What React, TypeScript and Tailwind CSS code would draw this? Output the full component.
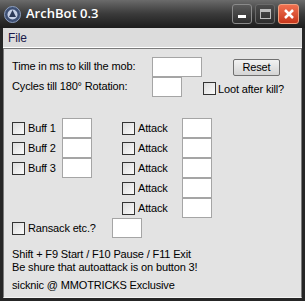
import React from "react";

const font = { fontFamily: '"Liberation Sans", Arial, sans-serif' };

function Box({ w }: { w: string }) {
  return <div className={`${w} h-[20px] bg-white border border-[#a5a5a5] shrink-0`} />;
}

function Check() {
  return (
    <div className="w-[13px] h-[13px] shrink-0 border border-[#333] bg-gradient-to-br from-[#dcdcdc] to-[#fafafa]" />
  );
}

function Row({ label, labelW }: { label: string; labelW: string }) {
  return (
    <div className="flex items-center h-[20px]">
      <Check />
      <span className={`ml-[3px] ${labelW}`}>{label}</span>
      <Box w="w-[30px]" />
    </div>
  );
}

export default function App() {
  return (
    <div className="w-[305px] h-[301px] bg-[#262626] flex flex-col text-[11px] tracking-[-0.15px] text-black whitespace-nowrap overflow-hidden" style={font}>
      {/* title bar */}
      <div className="h-[28px] flex items-center bg-gradient-to-b from-[#6b6b6b] via-[#3a3a3a] to-[#1d1d1d] pl-[4px] pr-[6px] shrink-0">
        <svg width="17" height="17" viewBox="0 0 17 17">
          <circle cx="8.5" cy="8.5" r="8" fill="#3d4f73" stroke="#8fa0c0" />
          <circle cx="8.5" cy="8.5" r="5" fill="#c7d1e6" />
          <path d="M8.5 4 L12 11 L5 11 Z" fill="#2d3a58" />
        </svg>
        <span className="ml-[5px] text-white text-[13px] font-semibold tracking-normal" style={{ fontFamily: '"Open Sans", sans-serif' }}>
          ArchBot 0.3
        </span>
        <div className="ml-auto flex gap-[3px]">
          <div className="w-[20px] h-[20px] rounded-[3px] border border-[#8a8a8a] bg-gradient-to-b from-[#5a5a5a] to-[#2e2e2e] flex items-end justify-center pb-[5px]">
            <div className="w-[8px] h-[3px] bg-white" />
          </div>
          <div className="w-[20px] h-[20px] rounded-[3px] border border-[#6a6a6a] bg-gradient-to-b from-[#4c4c4c] to-[#2e2e2e] flex items-center justify-center">
            <div className="w-[11px] h-[10px] border border-[#bbb] border-t-[3px]" />
          </div>
          <div className="w-[21px] h-[20px] rounded-[3px] border border-[#f0a080] bg-gradient-to-b from-[#f07050] to-[#c8361a] flex items-center justify-center">
            <svg width="12" height="12" viewBox="0 0 12 12">
              <path d="M2 2 L10 10 M10 2 L2 10" stroke="white" strokeWidth="2.5" />
            </svg>
          </div>
        </div>
      </div>

      <div className="flex-1 flex flex-col mx-[3px] mb-[3px] min-h-0">
        {/* menu */}
        <div className="h-[19px] bg-[#dcdcdc] flex items-center px-[5px] shrink-0 text-[12px]">
          <span className="text-[#1a1a4a]">File</span>
        </div>
        <div className="h-px bg-white shrink-0" />

        {/* panel */}
        <div className="flex-1 bg-[#e3e3e3] border border-[#7a7a7a] border-b-[#f4f4f4] pl-[8px] pt-[8px]">
          <div className="flex h-[40px]">
            <div className="w-[140px] flex flex-col">
              <span className="h-[20px] leading-[18px]">Time in ms to kill the mob:</span>
              <span className="h-[20px] leading-[18px]">Cycles till 180° Rotation:</span>
            </div>
            <div className="flex flex-col">
              <Box w="w-[50px]" />
              <Box w="w-[30px]" />
            </div>
            <div className="flex flex-col ml-px">
              <button className="ml-[30px] mt-[2px] w-[47px] h-[17px] border border-[#707070] rounded-[2px] bg-gradient-to-b from-[#f2f2f2] to-[#d4d4d4] leading-none text-[11px]">
                Reset
              </button>
              <div className="flex items-center mt-[5px]">
                <Check />
                <span className="ml-[2px]">Loot after kill?</span>
              </div>
            </div>
          </div>

          <div className="flex mt-[21px]">
            <div className="w-[110px] flex flex-col">
              <Row label="Buff 1" labelW="w-[34px]" />
              <Row label="Buff 2" labelW="w-[34px]" />
              <Row label="Buff 3" labelW="w-[34px]" />
            </div>
            <div className="flex flex-col">
              <Row label="Attack" labelW="w-[44px]" />
              <Row label="Attack" labelW="w-[44px]" />
              <Row label="Attack" labelW="w-[44px]" />
              <Row label="Attack" labelW="w-[44px]" />
              <Row label="Attack" labelW="w-[44px]" />
            </div>
          </div>

          <Row label="Ransack etc.?" labelW="w-[84px]" />

          <div className="mt-[10px] leading-[13px]">
            <div>Shift + F9 Start / F10 Pause / F11 Exit</div>
            <div>Be shure that autoattack is on button 3!</div>
            <div className="mt-[5px]">sicknic @ MMOTRICKS Exclusive</div>
          </div>
        </div>
      </div>
    </div>
  );
}
